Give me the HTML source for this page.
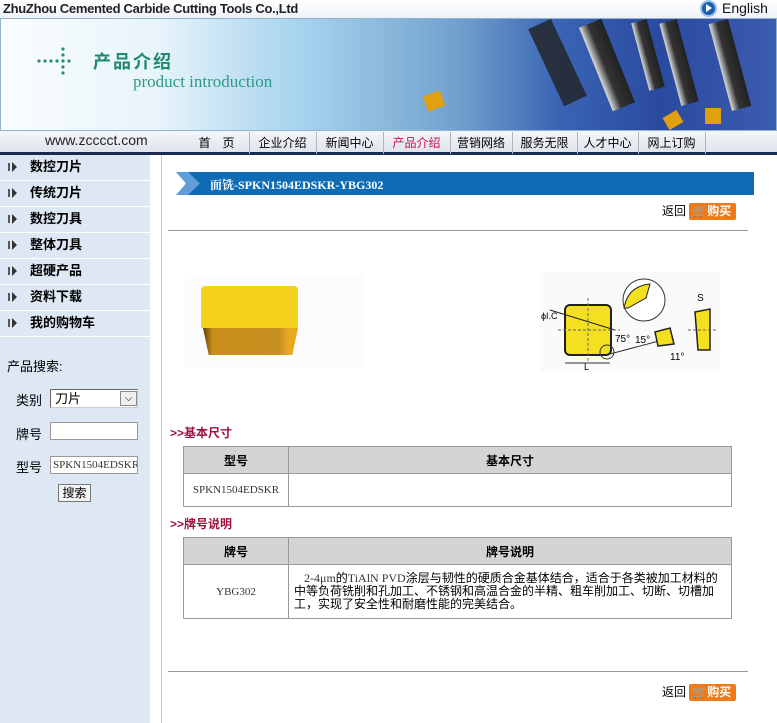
<!DOCTYPE html>
<html><head><meta charset="utf-8"><style>
*{margin:0;padding:0;box-sizing:border-box}
body{width:777px;height:723px;overflow:hidden;background:#fff;font-family:"Liberation Sans","Noto Sans CJK SC",sans-serif;position:relative;font-size:12px;color:#000}
.a{position:absolute}
.menu div{position:absolute;left:0;width:150px;height:26px;border-bottom:1px solid #fff;font-weight:bold;font-size:13px;line-height:24px;padding-left:30px}
.menu div:before{content:"";position:absolute;left:8px;top:8px;width:2px;height:8px;background:#555}
.menu div:after{content:"";position:absolute;left:12px;top:7px;border-left:5px solid #333;border-top:5px solid transparent;border-bottom:5px solid transparent}
.nav span{position:absolute;top:0;height:22px;line-height:22px;font-size:12px;text-align:center;border-left:1px solid #b0b4bc}
table{border-collapse:collapse;position:absolute}
td,th{border:1px solid #999}
th{background:#d4d4d4;font-size:12px;height:27px}
.mono{font-family:"Liberation Serif",serif;font-size:11px;color:#333}
.h2{color:#a0103a;font-weight:bold;font-size:12px}
.buy{display:inline-block;background:#f07a18;color:#fff;font-weight:bold;font-size:12px;padding:0 3px;border-radius:2px;height:17px;line-height:17px;vertical-align:middle;width:47px}
</style></head><body>
<div class="a" style="left:0;top:0;width:777px;height:18px;background:linear-gradient(#fff,#eef2f8)"></div>
<div class="a" style="left:3px;top:1px;font-size:13px;font-weight:bold;color:#222;letter-spacing:-0.3px">ZhuZhou Cemented Carbide Cutting Tools Co.,Ltd</div>
<div class="a" style="left:700px;top:0;width:17px;height:17px;border-radius:50%;background:#1c5fb0;border:2px solid #9cc0ea"></div>
<div class="a" style="left:706px;top:4px;border-left:6px solid #fff;border-top:4px solid transparent;border-bottom:4px solid transparent"></div>
<div class="a" style="left:722px;top:0;font-size:14px;color:#111">English</div>
<div class="a" style="left:0;top:18px;width:777px;height:113px;border:1px solid #8fb4cc;background:linear-gradient(90deg,#fafdff 0%,#e8f4fa 20%,#a8d4ee 38%,#8ab8dc 50%,#6d9dcc 60%,#3a64b4 72%,#2a4aa0 85%,#3c5cb0 100%)"></div>
<div class="a" style="left:545px;top:20px;width:25px;height:85px;background:#222;transform:rotate(-25deg);opacity:.8"></div>
<div class="a" style="left:595px;top:20px;width:24px;height:90px;background:linear-gradient(90deg,#ddd,#333 40%,#222);transform:rotate(-22deg)"></div>
<div class="a" style="left:640px;top:20px;width:16px;height:70px;background:linear-gradient(90deg,#ddd,#333 40%,#222);transform:rotate(-15deg)"></div>
<div class="a" style="left:670px;top:20px;width:18px;height:85px;background:linear-gradient(90deg,#ddd,#333 40%,#222);transform:rotate(-15deg)"></div>
<div class="a" style="left:720px;top:20px;width:20px;height:90px;background:linear-gradient(90deg,#ddd,#333 40%,#222);transform:rotate(-15deg)"></div>
<div class="a" style="left:425px;top:93px;width:18px;height:16px;background:#e0a010;transform:rotate(-20deg)"></div>
<div class="a" style="left:665px;top:113px;width:16px;height:14px;background:#e0a010;transform:rotate(-30deg)"></div>
<div class="a" style="left:705px;top:108px;width:16px;height:16px;background:#e0a010"></div>
<svg class="a" style="left:36px;top:46px" width="44" height="30"><g fill="#2a8a74"><circle cx="3" cy="15" r="1.6"/><circle cx="9" cy="15" r="1.6"/><circle cx="15" cy="15" r="1.6"/><circle cx="21" cy="15" r="1.6"/><circle cx="27" cy="15" r="1.6"/><circle cx="33" cy="15" r="1.6"/><circle cx="27" cy="3" r="1.6"/><circle cx="27" cy="9" r="1.6"/><circle cx="27" cy="21" r="1.6"/><circle cx="27" cy="27" r="1.6"/></g></svg>
<div class="a" style="left:93px;top:48px;color:#1e8a70;font-size:18px;font-weight:bold;letter-spacing:2px">产品介绍</div>
<div class="a" style="left:133px;top:72px;color:#2a9a86;font-size:17px;font-family:'Liberation Serif',serif">product introduction</div>
<div class="a" style="left:0;top:131px;width:777px;height:22px;background:linear-gradient(#f4f6fa,#dfe3ea)"></div>
<div class="a" style="left:0;top:152px;width:777px;height:3px;background:#1a2a50"></div>
<div class="a" style="left:45px;top:132px;font-size:14px;color:#222">www.zcccct.com</div>
<div class="nav a" style="left:0;top:132px">
<span style="left:185px;width:63px;border:0">首　页</span>
<span style="left:249px;width:66px">企业介绍</span>
<span style="left:316px;width:66px">新闻中心</span>
<span style="left:383px;width:66px;color:#c8104c">产品介绍</span>
<span style="left:450px;width:61px">营销网络</span>
<span style="left:512px;width:64px">服务无限</span>
<span style="left:577px;width:60px">人才中心</span>
<span style="left:638px;width:66px">网上订购</span>
<span style="left:705px;width:1px"></span>
</div>
<div class="a" style="left:0;top:155px;width:150px;height:568px;background:#dde8f4"></div>
<div class="menu">
<div style="top:155px">数控刀片</div>
<div style="top:181px">传统刀片</div>
<div style="top:207px">数控刀具</div>
<div style="top:233px">整体刀具</div>
<div style="top:259px">超硬产品</div>
<div style="top:285px">资料下载</div>
<div style="top:311px">我的购物车</div>
</div>
<div class="a" style="left:7px;top:356px;font-size:13px">产品搜索:</div>
<div class="a" style="left:16px;top:390px;font-size:13px">类别</div>
<div class="a" style="left:50px;top:389px;width:88px;height:19px;border:1px solid #666;border-right-color:#ccc;border-bottom-color:#ccc;background:#fff;font-size:13px;padding-left:4px;line-height:17px">刀片</div>
<div class="a" style="left:120px;top:391px;width:17px;height:15px;background:#eee;border:1px solid #888;font-size:10px;text-align:center;line-height:13px">⌵</div>
<div class="a" style="left:16px;top:424px;font-size:13px">牌号</div>
<div class="a" style="left:50px;top:422px;width:88px;height:18px;border:1px solid #999;background:#fff"></div>
<div class="a" style="left:16px;top:457px;font-size:13px">型号</div>
<div class="a" style="left:50px;top:456px;width:88px;height:18px;border:1px solid #999;background:#fff;font-family:'Liberation Serif',serif;font-size:11px;line-height:16px;padding-left:2px;color:#333;overflow:hidden;white-space:nowrap">SPKN1504EDSKR</div>
<div class="a" style="left:58px;top:484px;width:33px;height:18px;border:1px solid #777;background:#f4f4f4;font-size:12px;text-align:center;line-height:16px">搜索</div>
<div class="a" style="left:161px;top:155px;width:1px;height:568px;background:#ccc"></div>
<div class="a" style="left:168px;top:172px;width:586px;height:23px;background:#0f6cb4"></div>
<div class="a" style="left:168px;top:172px;width:30px;height:23px;background:#fff;clip-path:polygon(0 0,8px 0,20px 50%,8px 100%,0 100%,0 0)"></div>
<div class="a" style="left:176px;top:172px;width:24px;height:23px;background:#5f9ed8;clip-path:polygon(0 0,12px 0,24px 50%,12px 100%,0 100%,10px 50%)"></div>
<div class="a" style="left:210px;top:176px;color:#fff;font-weight:bold;font-size:12px;font-family:'Liberation Serif','Noto Serif CJK SC',serif">面铣-SPKN1504EDSKR-YBG302</div>
<div class="a" style="left:662px;top:202px;font-size:12px">返回 <span class="buy">🛒购买</span></div>
<div class="a" style="left:168px;top:230px;width:580px;height:1px;background:#999"></div>
<div class="a" style="left:185px;top:274px;width:180px;height:94px;background:#fcfcfc"></div>
<div class="a" style="left:201px;top:286px;width:97px;height:42px;background:#f4d21c;border-radius:4px 4px 0 0"></div>
<div class="a" style="left:203px;top:328px;width:95px;height:27px;background:linear-gradient(90deg,#5a3a08 0,#8a6010 4%,#c88e18 10%,#c89020 80%,#e8a820 90%);clip-path:polygon(0 0,100% 0,94% 100%,6% 100%)"></div>
<svg class="a" style="left:540px;top:272px" width="180" height="100" viewBox="0 0 180 100">
<rect x="0" y="0" width="180" height="100" fill="#fafafa"/>
<rect x="25" y="33" width="46" height="50" rx="5" fill="#f4e020" stroke="#222" stroke-width="2"/>
<line x1="10" y1="38" x2="75" y2="58" stroke="#222" stroke-width="1"/>
<line x1="48" y1="26" x2="48" y2="90" stroke="#666" stroke-dasharray="3,2"/>
<line x1="18" y1="58" x2="80" y2="58" stroke="#666" stroke-dasharray="3,2"/>
<circle cx="67" cy="80" r="7" fill="none" stroke="#333"/>
<line x1="70" y1="82" x2="130" y2="66" stroke="#333"/>
<line x1="25" y1="91" x2="70" y2="91" stroke="#333"/>
<text x="44" y="98" font-size="9" font-family="Liberation Sans">L</text>
<text x="1" y="47" font-size="9" font-family="Liberation Sans">ϕI.C</text>
<text x="75" y="70" font-size="10" font-family="Liberation Sans">75°</text>
<text x="95" y="71" font-size="10" font-family="Liberation Sans">15°</text>
<circle cx="104" cy="28" r="21" fill="#fff" stroke="#333"/>
<path d="M84 36 Q88 14 110 12 L106 26 L88 36 Z" fill="#f4e020" stroke="#222"/>
<polygon points="115,60 130,56 134,72 118,74" fill="#f4e020" stroke="#222" stroke-width="1.5"/>
<polygon points="155,40 170,37 170,78 158,78" fill="#f4e020" stroke="#222" stroke-width="1.5"/>
<line x1="148" y1="58" x2="178" y2="58" stroke="#666" stroke-dasharray="3,2"/>
<text x="157" y="29" font-size="10" font-family="Liberation Sans">S</text>
<text x="130" y="88" font-size="10" font-family="Liberation Sans">11°</text>
</svg>
<div class="a h2" style="left:170px;top:424px">&gt;&gt;基本尺寸</div>
<table style="left:183px;top:446px;width:549px">
<tr><th style="width:105px">型号</th><th>基本尺寸</th></tr>
<tr><td class="mono" style="height:33px;text-align:center">SPKN1504EDSKR</td><td></td></tr>
</table>
<div class="a h2" style="left:170px;top:515px">&gt;&gt;牌号说明</div>
<table style="left:183px;top:537px;width:549px">
<tr><th style="width:105px">牌号</th><th>牌号说明</th></tr>
<tr><td class="mono" style="height:54px;text-align:center">YBG302</td><td style="font-size:12px;line-height:13px;padding:2px 6px 2px 5px">&nbsp;&nbsp;&nbsp;<span class="mono" style="font-size:12px">2-4μm</span>的<span class="mono" style="font-size:12px">TiAlN PVD</span>涂层与韧性的硬质合金基体结合，适合于各类被加工材料的中等负荷铣削和孔加工、不锈钢和高温合金的半精、粗车削加工、切断、切槽加工，实现了安全性和耐磨性能的完美结合。</td></tr>
</table>
<div class="a" style="left:168px;top:671px;width:580px;height:1px;background:#999"></div>
<div class="a" style="left:662px;top:683px;font-size:12px">返回 <span class="buy">🛒购买</span></div>
</body></html>
